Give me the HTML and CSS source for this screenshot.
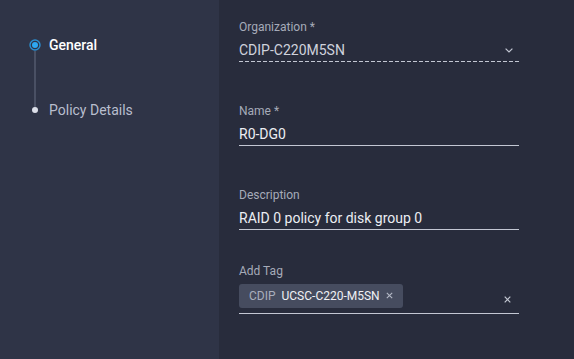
FILE: index.html
```html
<!DOCTYPE html>
<html lang="en">
<head>
<meta charset="utf-8">
<title>Policy</title>
<link rel="stylesheet" href="styles.css">
</head>
<body>
<div class="page">
  <aside class="sidebar">
    <ol class="steps">
      <li class="step step-active">
        <span class="marker">
          <svg width="12" height="12" viewBox="0 0 12 12"><circle cx="6" cy="6" r="5" fill="none" stroke="#2a8fd2" stroke-width="1.4"/><circle cx="6" cy="6" r="3" fill="#2ea8f2"/></svg>
        </span>
        <span class="step-label">General</span>
      </li>
      <li class="step">
        <span class="marker"><span class="dot"></span></span>
        <span class="step-label">Policy Details</span>
      </li>
    </ol>
  </aside>
  <main class="content">
    <form class="form">
      <div class="field">
        <label class="label">Organization *</label>
        <div class="value-row dashed">
          <span class="value value-select">CDIP-C220M5SN</span>
          <svg class="chevron" width="8" height="5" viewBox="0 0 8 5"><path d="M0.6 0.6 L4 4 L7.4 0.6" fill="none" stroke="#c3c7d2" stroke-width="1.2"/></svg>
        </div>
      </div>
      <div class="field">
        <label class="label">Name *</label>
        <div class="value-row solid">
          <span class="value">R0-DG0</span>
        </div>
      </div>
      <div class="field">
        <label class="label">Description</label>
        <div class="value-row solid">
          <span class="value">RAID 0 policy for disk group 0</span>
        </div>
      </div>
      <div class="field field-tag">
        <label class="label">Add Tag</label>
        <div class="tag-row solid">
          <span class="chip">
            <span class="chip-key">CDIP</span>
            <span class="chip-val">UCSC-C220-M5SN</span>
            <svg class="chip-x" width="7" height="7" viewBox="0 0 7 7"><path d="M0.8 0.8 L6.2 6.2 M6.2 0.8 L0.8 6.2" stroke="#b4b9c6" stroke-width="1.1"/></svg>
          </span>
          <svg class="clear-x" width="7" height="7" viewBox="0 0 7 7"><path d="M0.7 0.7 L6.3 6.3 M6.3 0.7 L0.7 6.3" stroke="#c3c7d2" stroke-width="1.2"/></svg>
        </div>
      </div>
    </form>
  </main>
</div>
</body>
</html>
```

FILE: styles.css
```css
html, body {
  margin: 0;
  padding: 0;
  height: 100%;
}
body {
  background: #282c3c;
  font-family: Roboto, "Liberation Sans", Arial, sans-serif;
  overflow: hidden;
}
.page {
  display: flex;
  height: 100vh;
}
.sidebar {
  width: 219px;
  flex: none;
  background: #2f3447;
}
.steps {
  list-style: none;
  margin: 0;
  padding: 35px 0 0 29px;
  display: flex;
  flex-direction: column;
  gap: 45px;
  position: relative;
}
.steps::before {
  content: "";
  position: absolute;
  left: 34px;
  top: 51px;
  width: 2px;
  height: 57px;
  background: #4a5064;
}
.step {
  display: flex;
  align-items: center;
  gap: 8px;
  height: 20px;
}
.marker {
  width: 12px;
  height: 12px;
  display: flex;
  align-items: center;
  justify-content: center;
  position: relative;
  z-index: 1;
}
.marker svg {
  display: block;
}
.dot {
  width: 6px;
  height: 6px;
  border-radius: 50%;
  background: #dcdfe9;
}
.step-label {
  font-size: 14px;
  line-height: 20px;
  color: #b9bece;
}
.step-active .step-label {
  color: #ffffff;
  font-weight: 500;
}
.content {
  flex: 1;
  padding: 19px 0 0 20px;
}
.form {
  width: 280px;
  display: flex;
  flex-direction: column;
  gap: 41px;
}
.field {
  display: flex;
  flex-direction: column;
}
.field-tag {
  margin-top: -8px;
}
.label {
  font-size: 12px;
  line-height: 16px;
  color: #a6abb9;
}
.value-row {
  margin-top: 4px;
  height: 22px;
  display: flex;
  align-items: center;
  justify-content: space-between;
}
.solid {
  border-bottom: 1px solid #c3c7d3;
}
.dashed {
  height: 22px;
  padding-bottom: 1px;
  background-image: repeating-linear-gradient(to right, #c3c7d3 0, #c3c7d3 4px, transparent 4px, transparent 6px);
  background-size: 100% 1px;
  background-repeat: no-repeat;
  background-position: left bottom;
}
.value {
  font-size: 14px;
  line-height: 22px;
  color: #eceef3;
}
.value-select {
  color: #cfd2dc;
}
.chevron {
  margin-right: 6px;
  display: block;
}
.tag-row {
  margin-top: 5px;
  padding-bottom: 5px;
  display: flex;
  align-items: flex-start;
  justify-content: space-between;
}
.chip {
  display: inline-flex;
  align-items: center;
  height: 24px;
  padding: 0 10px;
  background: #464c5f;
  border-radius: 3px;
  font-size: 12px;
}
.chip-key {
  color: #a9aebd;
  margin-right: 6px;
}
.chip-val {
  color: #f0f1f5;
  margin-right: 6px;
}
.chip-x {
  display: block;
  margin-top: -1px;
}
.clear-x {
  display: block;
  margin-top: 12px;
  margin-right: 8px;
}
```
